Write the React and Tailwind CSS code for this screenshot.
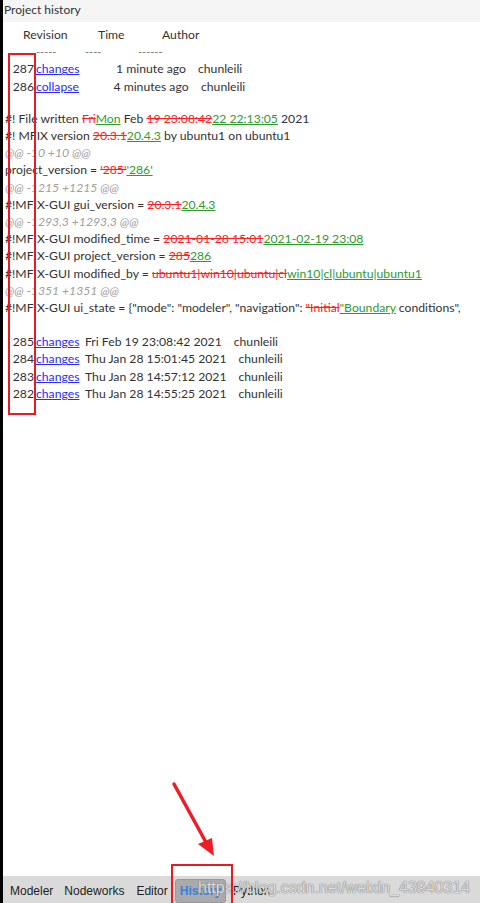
import React from 'react';

const Del = ({ children }) => <span className="text-[#ff2020] line-through">{children}</span>;
const Add = ({ children }) => <span className="text-[#2f9a2f] underline decoration-[#2f9a2f]">{children}</span>;
const Hunk = ({ children }) => <div className="italic text-[#a0a0a0]">{children}</div>;

const older = [
  ['285', 'Fri Feb 19 23:08:42 2021'],
  ['284', 'Thu Jan 28 15:01:45 2021'],
  ['283', 'Thu Jan 28 14:57:12 2021'],
  ['282', 'Thu Jan 28 14:55:25 2021'],
];

export default function App() {
  return (
    <div className="relative flex w-[480px] h-[903px] bg-white overflow-hidden">
      <div className="w-[3px] bg-black shrink-0" />
      <div className="flex flex-col flex-1 min-w-0">
        <div className="h-[22px] bg-[#f5f5f5] pl-[1px] pt-[1px] text-[12px] text-[#333] font-['Lato',sans-serif]">
          Project history
        </div>

        <div className="flex-1 pt-[4px] pl-[2px] text-[12.2px] leading-[17.2px] text-[#333] font-['Lato',sans-serif] whitespace-nowrap">
          <div className="flex">
            <span className="ml-[18px] w-[75px]">Revision</span>
            <span className="w-[64px]">Time</span>
            <span>Author</span>
          </div>
          <div className="flex text-[#777] text-[11px]">
            <span className="ml-[31px] w-[49px]">-----</span>
            <span className="w-[53px]">----</span>
            <span>------</span>
          </div>
          <div className="flex">
            <span className="w-[29px] text-right">287</span>
            <a className="ml-[2px] w-[70px] text-[#2a2aff] underline">changes</a>
            <span className="w-[90px] text-center">1 minute ago</span>
            <span className="ml-[2px]">chunleili</span>
          </div>
          <div className="flex">
            <span className="w-[29px] text-right">286</span>
            <a className="ml-[2px] w-[70px] text-[#2a2aff] underline">collapse</a>
            <span className="w-[90px] text-center">4 minutes ago</span>
            <span className="ml-[5px]">chunleili</span>
          </div>

          <div className="mt-[15px]">
            #! File written <Del>Fri</Del><Add>Mon</Add> Feb <Del>19 23:08:42</Del><Add>22 22:13:05</Add> 2021
          </div>
          <div>
            #! MFIX version <Del>20.3.1</Del><Add>20.4.3</Add> by ubuntu1 on ubuntu1
          </div>
          <Hunk>@@ -10 +10 @@</Hunk>
          <div>
            project_version = <Del>'285'</Del><Add>'286'</Add>
          </div>
          <Hunk>@@ -1215 +1215 @@</Hunk>
          <div>
            #!MFIX-GUI gui_version = <Del>20.3.1</Del><Add>20.4.3</Add>
          </div>
          <Hunk>@@ -1293,3 +1293,3 @@</Hunk>
          <div>
            #!MFIX-GUI modified_time = <Del>2021-01-28 15:01</Del><Add>2021-02-19 23:08</Add>
          </div>
          <div>
            #!MFIX-GUI project_version = <Del>285</Del><Add>286</Add>
          </div>
          <div>
            #!MFIX-GUI modified_by = <Del>ubuntu1|win10|ubuntu|cl</Del><Add>win10|cl|ubuntu|ubuntu1</Add>
          </div>
          <Hunk>@@ -1351 +1351 @@</Hunk>
          <div>
            #!MFIX-GUI ui_state = {'{'}"mode": "modeler", "navigation": <Del>"Initial</Del><Add>"Boundary</Add> conditions",
          </div>

          <div className="mt-[17px]">
            {older.map(([rev, date]) => (
              <div key={rev} className="flex">
                <span className="w-[29px] text-right">{rev}</span>
                <a className="ml-[2px] w-[49px] text-[#2a2aff] underline">changes</a>
                <span>{date}</span>
                <span className="ml-[12px]">chunleili</span>
              </div>
            ))}
          </div>
        </div>

        <div className="relative h-[27px] bg-[#dadada] flex items-center pt-[2px] pl-[7px] text-[12px] text-[#222] font-['Liberation_Sans',Arial,sans-serif]">
          <span>Modeler</span>
          <span className="ml-[11px]">Nodeworks</span>
          <span className="ml-[12px]">Editor</span>
          <span className="ml-[7px] px-[4px] py-[2px] rounded-[3px] bg-[#aaaaaa] border border-[#999] font-bold text-[#3a7fe0]">
            History
          </span>
          <span className="ml-[7px]">Python</span>
          <span className="absolute left-[195px] top-0 text-[16px] text-[#f2f2f2]/85 [text-shadow:0_0_1px_#666,0_0_1px_#888] font-['Liberation_Sans',Arial,sans-serif] pointer-events-none">
            https://blog.csdn.net/weixin_43940314
          </span>
        </div>
      </div>

      {/* annotation overlays */}
      <div className="absolute left-[8px] top-[53px] w-[28px] h-[362px] border-2 border-[#e81a22]" />
      <div className="absolute left-[171px] top-[864px] w-[62px] h-[42px] border-2 border-[#e81a22]" />
      <svg className="absolute left-[168px] top-[780px]" width="56" height="80" viewBox="0 0 56 80">
        <line x1="6" y1="4" x2="40" y2="66" stroke="#ee1c25" strokeWidth="3.5" strokeLinecap="round" />
        <polygon points="30,64 46,76 44,58" fill="#ee1c25" />
      </svg>
    </div>
  );
}
